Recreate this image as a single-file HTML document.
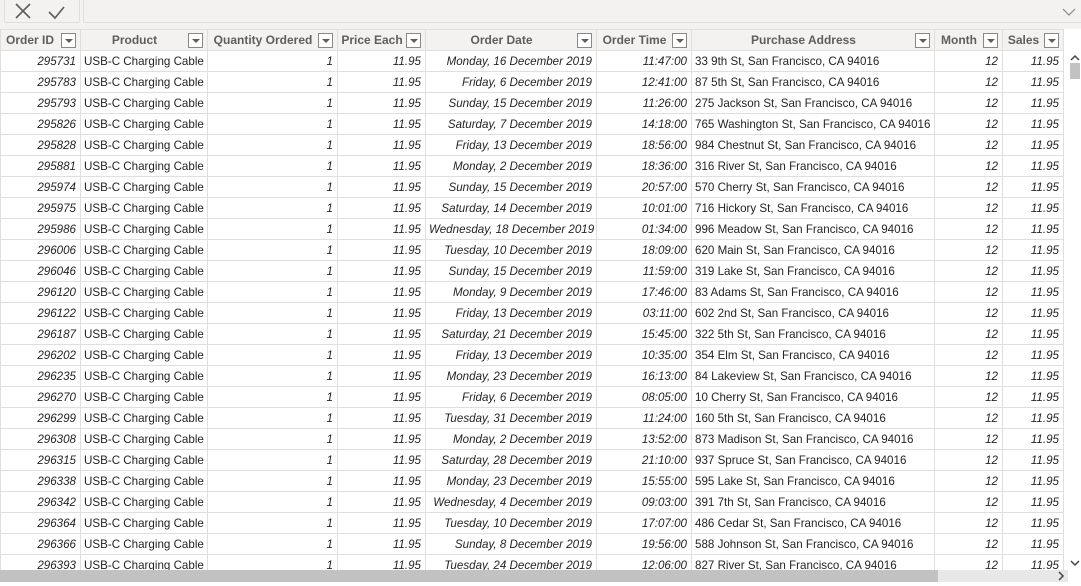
<!DOCTYPE html>
<html><head><meta charset="utf-8"><style>
*{box-sizing:border-box;margin:0;padding:0}
body{width:1081px;height:586px;overflow:hidden;background:#fff;font-family:"Liberation Sans",sans-serif;position:relative}
.tb{position:absolute;left:0;top:0;width:1081px;height:29px;background:#f3f2f1}
.b1{position:absolute;left:4px;top:-2px;width:76px;height:25px;border:1px solid #e1dfdd;border-radius:2px;background:#f3f2f1}
.b2{position:absolute;left:83px;top:-2px;width:1000px;height:25px;border:1px solid #e1dfdd;border-radius:2px;background:#f3f2f1}
table{position:absolute;left:0;top:29px;border-collapse:collapse;table-layout:fixed;width:1063px;font-size:11.6px}
td,th{height:21px;border:1px solid #e1dfdd;padding:0 4px 0 3px;white-space:nowrap;overflow:hidden;color:#252423}
th{background:#f3f2f1;color:#605e5c;font-weight:bold;position:relative;text-align:center;padding-right:22px;font-size:12px}
th:first-child{text-align:left;padding-left:5px}
th i{position:absolute;right:4px;top:3px;width:15px;height:15px;border:1px solid #8a8886;background:#fff}
th i:after{content:"";position:absolute;left:3px;top:5px;border-left:4px solid transparent;border-right:4px solid transparent;border-top:4px solid #605e5c}
.r{text-align:right;font-style:italic}
.hs{position:absolute;left:0;top:570px;width:1068px;height:12px;background:#e8e8e8}
.hs div{position:absolute;left:0;top:0;width:938px;height:12px;background:#c2c2c2}
.vs{position:absolute;left:1069px;top:50px;width:12px;height:520px;background:#fff}
.vs div{position:absolute;left:1px;top:13px;width:10px;height:16px;background:#c2c2c2}
</style></head><body>
<div class="tb"><div class="b1">
<svg width="76" height="25" style="position:absolute;left:0;top:0"><path d="M11 5L25 19M25 5L11 19" stroke="#5f5e5c" stroke-width="1.6" fill="none"/><path d="M44 13L50 19L59 8" stroke="#5f5e5c" stroke-width="1.6" fill="none"/></svg></div>
<div class="b2"><svg width="14" height="10" style="position:absolute;left:978px;top:8px"><path d="M1 2L7 8L13 2" stroke="#8a8886" stroke-width="1.2" fill="none"/></svg></div></div>
<table>
<colgroup><col style="width:80px"><col style="width:127px"><col style="width:130px"><col style="width:88px"><col style="width:171px"><col style="width:95px"><col style="width:243px"><col style="width:68px"><col style="width:61px"></colgroup>
<tr><th>Order ID<i></i></th><th>Product<i></i></th><th>Quantity Ordered<i></i></th><th>Price Each<i></i></th><th>Order Date<i></i></th><th>Order Time<i></i></th><th>Purchase Address<i></i></th><th>Month<i></i></th><th>Sales<i></i></th></tr>
<tr><td class="r">295731</td><td>USB-C Charging Cable</td><td class="r">1</td><td class="r">11.95</td><td class="r">Monday, 16 December 2019</td><td class="r">11:47:00</td><td>33 9th St, San Francisco, CA 94016</td><td class="r">12</td><td class="r">11.95</td></tr>
<tr><td class="r">295783</td><td>USB-C Charging Cable</td><td class="r">1</td><td class="r">11.95</td><td class="r">Friday, 6 December 2019</td><td class="r">12:41:00</td><td>87 5th St, San Francisco, CA 94016</td><td class="r">12</td><td class="r">11.95</td></tr>
<tr><td class="r">295793</td><td>USB-C Charging Cable</td><td class="r">1</td><td class="r">11.95</td><td class="r">Sunday, 15 December 2019</td><td class="r">11:26:00</td><td>275 Jackson St, San Francisco, CA 94016</td><td class="r">12</td><td class="r">11.95</td></tr>
<tr><td class="r">295826</td><td>USB-C Charging Cable</td><td class="r">1</td><td class="r">11.95</td><td class="r">Saturday, 7 December 2019</td><td class="r">14:18:00</td><td>765 Washington St, San Francisco, CA 94016</td><td class="r">12</td><td class="r">11.95</td></tr>
<tr><td class="r">295828</td><td>USB-C Charging Cable</td><td class="r">1</td><td class="r">11.95</td><td class="r">Friday, 13 December 2019</td><td class="r">18:56:00</td><td>984 Chestnut St, San Francisco, CA 94016</td><td class="r">12</td><td class="r">11.95</td></tr>
<tr><td class="r">295881</td><td>USB-C Charging Cable</td><td class="r">1</td><td class="r">11.95</td><td class="r">Monday, 2 December 2019</td><td class="r">18:36:00</td><td>316 River St, San Francisco, CA 94016</td><td class="r">12</td><td class="r">11.95</td></tr>
<tr><td class="r">295974</td><td>USB-C Charging Cable</td><td class="r">1</td><td class="r">11.95</td><td class="r">Sunday, 15 December 2019</td><td class="r">20:57:00</td><td>570 Cherry St, San Francisco, CA 94016</td><td class="r">12</td><td class="r">11.95</td></tr>
<tr><td class="r">295975</td><td>USB-C Charging Cable</td><td class="r">1</td><td class="r">11.95</td><td class="r">Saturday, 14 December 2019</td><td class="r">10:01:00</td><td>716 Hickory St, San Francisco, CA 94016</td><td class="r">12</td><td class="r">11.95</td></tr>
<tr><td class="r">295986</td><td>USB-C Charging Cable</td><td class="r">1</td><td class="r">11.95</td><td class="r">Wednesday, 18 December 2019</td><td class="r">01:34:00</td><td>996 Meadow St, San Francisco, CA 94016</td><td class="r">12</td><td class="r">11.95</td></tr>
<tr><td class="r">296006</td><td>USB-C Charging Cable</td><td class="r">1</td><td class="r">11.95</td><td class="r">Tuesday, 10 December 2019</td><td class="r">18:09:00</td><td>620 Main St, San Francisco, CA 94016</td><td class="r">12</td><td class="r">11.95</td></tr>
<tr><td class="r">296046</td><td>USB-C Charging Cable</td><td class="r">1</td><td class="r">11.95</td><td class="r">Sunday, 15 December 2019</td><td class="r">11:59:00</td><td>319 Lake St, San Francisco, CA 94016</td><td class="r">12</td><td class="r">11.95</td></tr>
<tr><td class="r">296120</td><td>USB-C Charging Cable</td><td class="r">1</td><td class="r">11.95</td><td class="r">Monday, 9 December 2019</td><td class="r">17:46:00</td><td>83 Adams St, San Francisco, CA 94016</td><td class="r">12</td><td class="r">11.95</td></tr>
<tr><td class="r">296122</td><td>USB-C Charging Cable</td><td class="r">1</td><td class="r">11.95</td><td class="r">Friday, 13 December 2019</td><td class="r">03:11:00</td><td>602 2nd St, San Francisco, CA 94016</td><td class="r">12</td><td class="r">11.95</td></tr>
<tr><td class="r">296187</td><td>USB-C Charging Cable</td><td class="r">1</td><td class="r">11.95</td><td class="r">Saturday, 21 December 2019</td><td class="r">15:45:00</td><td>322 5th St, San Francisco, CA 94016</td><td class="r">12</td><td class="r">11.95</td></tr>
<tr><td class="r">296202</td><td>USB-C Charging Cable</td><td class="r">1</td><td class="r">11.95</td><td class="r">Friday, 13 December 2019</td><td class="r">10:35:00</td><td>354 Elm St, San Francisco, CA 94016</td><td class="r">12</td><td class="r">11.95</td></tr>
<tr><td class="r">296235</td><td>USB-C Charging Cable</td><td class="r">1</td><td class="r">11.95</td><td class="r">Monday, 23 December 2019</td><td class="r">16:13:00</td><td>84 Lakeview St, San Francisco, CA 94016</td><td class="r">12</td><td class="r">11.95</td></tr>
<tr><td class="r">296270</td><td>USB-C Charging Cable</td><td class="r">1</td><td class="r">11.95</td><td class="r">Friday, 6 December 2019</td><td class="r">08:05:00</td><td>10 Cherry St, San Francisco, CA 94016</td><td class="r">12</td><td class="r">11.95</td></tr>
<tr><td class="r">296299</td><td>USB-C Charging Cable</td><td class="r">1</td><td class="r">11.95</td><td class="r">Tuesday, 31 December 2019</td><td class="r">11:24:00</td><td>160 5th St, San Francisco, CA 94016</td><td class="r">12</td><td class="r">11.95</td></tr>
<tr><td class="r">296308</td><td>USB-C Charging Cable</td><td class="r">1</td><td class="r">11.95</td><td class="r">Monday, 2 December 2019</td><td class="r">13:52:00</td><td>873 Madison St, San Francisco, CA 94016</td><td class="r">12</td><td class="r">11.95</td></tr>
<tr><td class="r">296315</td><td>USB-C Charging Cable</td><td class="r">1</td><td class="r">11.95</td><td class="r">Saturday, 28 December 2019</td><td class="r">21:10:00</td><td>937 Spruce St, San Francisco, CA 94016</td><td class="r">12</td><td class="r">11.95</td></tr>
<tr><td class="r">296338</td><td>USB-C Charging Cable</td><td class="r">1</td><td class="r">11.95</td><td class="r">Monday, 23 December 2019</td><td class="r">15:55:00</td><td>595 Lake St, San Francisco, CA 94016</td><td class="r">12</td><td class="r">11.95</td></tr>
<tr><td class="r">296342</td><td>USB-C Charging Cable</td><td class="r">1</td><td class="r">11.95</td><td class="r">Wednesday, 4 December 2019</td><td class="r">09:03:00</td><td>391 7th St, San Francisco, CA 94016</td><td class="r">12</td><td class="r">11.95</td></tr>
<tr><td class="r">296364</td><td>USB-C Charging Cable</td><td class="r">1</td><td class="r">11.95</td><td class="r">Tuesday, 10 December 2019</td><td class="r">17:07:00</td><td>486 Cedar St, San Francisco, CA 94016</td><td class="r">12</td><td class="r">11.95</td></tr>
<tr><td class="r">296366</td><td>USB-C Charging Cable</td><td class="r">1</td><td class="r">11.95</td><td class="r">Sunday, 8 December 2019</td><td class="r">19:56:00</td><td>588 Johnson St, San Francisco, CA 94016</td><td class="r">12</td><td class="r">11.95</td></tr>
<tr><td class="r">296393</td><td>USB-C Charging Cable</td><td class="r">1</td><td class="r">11.95</td><td class="r">Tuesday, 24 December 2019</td><td class="r">12:06:00</td><td>827 River St, San Francisco, CA 94016</td><td class="r">12</td><td class="r">11.95</td></tr>
</table>
<div class="vs"><svg width="12" height="10" style="position:absolute;left:0;top:3px"><path d="M2 7L6 3L10 7" stroke="#444" stroke-width="1.5" fill="none"/></svg><div></div><svg width="12" height="10" style="position:absolute;left:0;top:508px"><path d="M2 3L6 7L10 3" stroke="#444" stroke-width="1.5" fill="none"/></svg></div>
<div class="hs"><div></div><svg width="10" height="12" style="position:absolute;left:1056px;top:0"><path d="M3 2L7 6L3 10" stroke="#444" stroke-width="1.5" fill="none"/></svg></div>
<div style="position:absolute;left:0;top:582px;width:1081px;height:4px;background:#fff"></div>
</body></html>
